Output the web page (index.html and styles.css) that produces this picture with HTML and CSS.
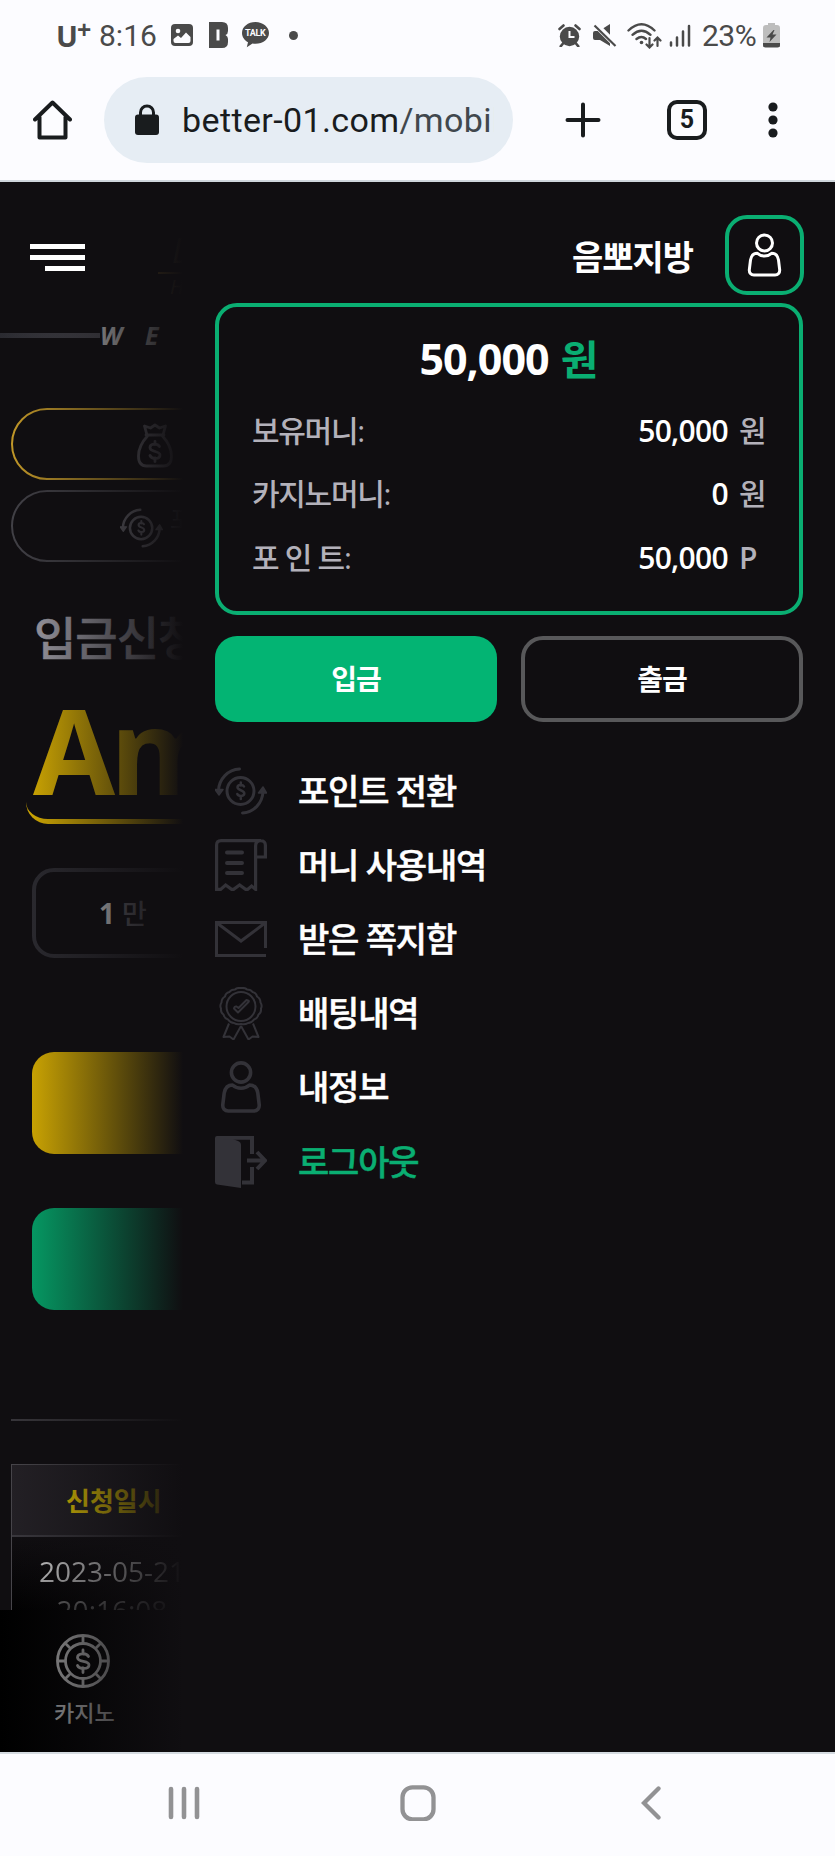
FILE: index.html
```html
<!DOCTYPE html>
<html lang="ko">
<head>
<meta charset="utf-8">
<title>better-01.com</title>
<link rel="stylesheet" href="styles.css">
</head>
<body>
<svg class="defs" width="0" height="0">
  <symbol id="convert" viewBox="0 0 52 48">
    <g fill="none" stroke="currentColor" stroke-width="3" stroke-linecap="round">
      <circle cx="25.5" cy="24" r="13.5"/>
      <path d="M24.500 2C13 2.500 4 12 3.500 23.500M27.500 46C39 45.500 47.500 36 48 24.500"/>
      <path d="M29 19.500c-1-2-6.500-2.200-6.500.8 0 3.500 6.800 2.400 6.800 6.200 0 3-5.800 3.200-7 .5M25.800 15.500v3M25.800 29v3" stroke-width="2.500"/>
    </g>
    <path d="M0 22.500h8L4 28zM43.500 26h8L48 20z" fill="currentColor" stroke="currentColor" stroke-width="1.500" stroke-linejoin="round"/>
  </symbol>
  <symbol id="user" viewBox="0 0 42 52">
    <g fill="none" stroke="currentColor" stroke-width="3.600" stroke-linejoin="round">
      <circle cx="21" cy="11.500" r="9.600"/>
      <path d="M12.500 24c2.500 2.200 5.500 3.300 8.500 3.300s6-1.100 8.500-3.300c5 0 7.500 3.500 8.300 8l1.400 11.500c.4 4-2 6.500-5.500 6.500H8.300c-3.500 0-5.900-2.500-5.500-6.500L4.200 32c.8-4.500 3.300-8 8.300-8z"/>
    </g>
  </symbol>
</svg>

<header class="system">
  <div class="status">
    <div class="status-left">
      <span class="carrier">U<sup>+</sup></span>
      <span class="clock">8:16</span>
      <svg class="i-pic" width="22" height="22" viewBox="0 0 22 22"><rect width="22" height="22" rx="4" fill="#4a4a4a"/><circle cx="7" cy="7" r="2.300" fill="#fcfcff"/><path d="M2.500 17v-2l4.500-3.500 3 2.500 5-5.500 4.500 4.500v4q0 2-2 2h-13q-2 0-2-2z" fill="#fcfcff"/></svg>
      <svg class="i-b" width="20" height="26" viewBox="0 0 20 26"><path d="M0 0h13q6 0 6 6v3q0 3-2.500 4Q19 14.500 19 17v3q0 6-6 6H0z" fill="#4a4a4a"/><path d="M7.500 7.500h3v11h-3z" fill="#fcfcff"/></svg>
      <span class="talk"><svg width="27" height="26" viewBox="0 0 27 26"><path d="M13.500 0C6 0 0 4.700 0 11c0 4 2.400 7.200 6 9.200l-1.200 5L10.500 21.500c1 .2 2 .3 3 .3C21 21.800 27 17 27 11S21 0 13.500 0z" fill="#4a4a4a"/></svg><b>TALK</b></span>
      <i class="dot"></i>
    </div>
    <div class="status-right">
      <svg width="23" height="23" viewBox="0 0 23 23"><circle cx="11.500" cy="12.500" r="9.700" fill="#4a4a4a"/><path d="M1.500 5 5.500 1.500M21.500 5 17.500 1.500M5 19.500l-2.300 2.800M18 19.500l2.300 2.800" stroke="#4a4a4a" stroke-width="2.600" stroke-linecap="round"/><path d="M11.500 7v6h5" fill="none" stroke="#fcfcff" stroke-width="2"/></svg>
      <svg class="i-mute" width="24" height="23" viewBox="0 0 24 23"><path d="M0 9q0-2 2-2h4l11-7v22L7 16H2q-2 0-2-2z" fill="#4a4a4a"/><path d="M1-1 24 22" stroke="#fcfcff" stroke-width="6"/><path d="M1.500 1.500 22.500 22" stroke="#4a4a4a" stroke-width="2.200"/></svg>
      <svg class="i-wifi" width="35" height="27" viewBox="0 0 35 27"><g fill="none" stroke="#4a4a4a" stroke-width="2.400" stroke-linecap="round"><path d="M1.500 8.500Q14.500-4 27.500 8.500M5.500 12.800q9-8 18 0M9.500 17q5-4 9.500 0"/><path d="M22.500 16v9M19.500 22.500l3 3 3-3M30.500 24v-8M27.500 18.500l3-3 3 3" stroke-width="2.200"/></g><circle cx="14.500" cy="20.500" r="1.800" fill="#4a4a4a"/></svg>
      <svg class="i-sig" width="22" height="23" viewBox="0 0 22 23"><path d="M2 18.500v3M8 13.500v8M14 7.500v14M20 2v19.500" stroke="#4a4a4a" stroke-width="2.500" stroke-linecap="round"/></svg>
      <span class="pct">23%</span>
      <svg class="i-bat" width="17" height="25" viewBox="0 0 17 25"><path d="M5 0h7v2h2q3 0 3 3v19H0V5q0-3 3-3h2z" fill="#bdbdbd"/><path d="M0 20h17v2q0 2.500-2.500 2.500h-12Q0 24.500 0 22z" fill="#4a4a4a"/><path d="m10.500 7-7 7.500h4L6.500 19l7-7.500h-4l2-4.500z" fill="#4a4a4a"/></svg>
    </div>
  </div>
  <div class="toolbar">
    <svg class="i-home" width="39" height="40" viewBox="0 0 39 40"><path d="M2 19.500 19.500 2.500 37 19.500M6.500 17v20.500h26V17" fill="none" stroke="#191c1e" stroke-width="4" stroke-linejoin="round" stroke-linecap="round"/></svg>
    <div class="omnibox">
      <svg width="24" height="32" viewBox="0 0 24 32"><rect y="10.500" width="24" height="20.500" rx="3" fill="#191c1e"/><path d="M5.500 12V8.500a6.500 6.500 0 0 1 13 0V12" fill="none" stroke="#191c1e" stroke-width="3"/></svg>
      <div class="url">better-01.com<span>/mobil</span></div>
    </div>
    <svg class="i-plus" width="36" height="36" viewBox="0 0 36 36"><path d="M2.500 18h31M18 2.500v31" stroke="#191c1e" stroke-width="4" stroke-linecap="round"/></svg>
    <div class="tabs">5</div>
    <svg class="i-more" width="10" height="36" viewBox="0 0 10 36"><g fill="#191c1e"><circle cx="5" cy="5" r="4.600"/><circle cx="5" cy="18" r="4.600"/><circle cx="5" cy="31" r="4.600"/></g></svg>
  </div>
</header>

<main class="app">
  <div class="page">
    <div class="brand"><span class="brand-a">L</span><span class="brand-b">H</span></div>
    <div class="notice"><i></i><span>W</span><span>E</span></div>
    <div class="pill gold">
      <svg class="bag" width="36" height="45" viewBox="0 0 36 45"><g fill="none" stroke="#8c8b94" stroke-width="2.800" stroke-linejoin="round" stroke-linecap="round"><path d="M10 12 7.500 3l6 2L18 2l4.500 3 6-2L26 12zM9 12h18M10.500 13C5 19 1.500 26 1.500 33c0 7 3 10 8 10h17c5 0 8-3 8-10 0-7-3.500-14-9-20"/><path d="M22.500 23.500c-2-3.500-9.500-3-9.500 1 0 5 10 3 10 7.500 0 4.500-8 4.500-10 .5M18 18.500v3M18 35v3.500"/></g></svg>
    </div>
    <div class="pill plain"><svg class="turn" width="43" height="40"><use href="#convert"/></svg><span>포</span></div>
    <h1>입금신청</h1>
    <div class="amount">Amount</div>
    <div class="quick"><b>1</b> 만</div>
    <div class="btn yellow"></div>
    <div class="btn green"></div>
    <hr>
    <div class="table">
      <div class="th">신청일시</div>
      <div class="td">2023-05-21<br>20:16:08</div>
    </div>
  </div>
  <div class="bottombar">
    <svg width="54" height="54" viewBox="0 0 54 54"><g fill="none" stroke="#a5a5a5" stroke-width="2.800"><circle cx="27" cy="27" r="25.500"/><circle cx="27" cy="27" r="17.500"/><path d="M27 2v8M27 44v8M2 27h8M44 27h8M9.500 9.500l5.500 5.500M39 39l5.500 5.500M9.500 44.500 15 39M39 15l5.500-5.500"/><path d="M32.500 22.500c-2-4-11-3.500-11 1 0 5.500 11.500 2.500 11.500 7.500 0 4.500-9.500 4.500-11.500.5M27 16v4M27 34v4.500" stroke-linecap="round"/></g></svg>
    <span>카지노</span>
  </div>
  <div class="fade"></div>
  <div class="burger"><i></i><i></i><i></i></div>

  <aside class="drawer">
    <div class="who"><strong>음뽀지방</strong><div class="avatar"><svg width="35" height="44"><use href="#user"/></svg></div></div>
    <section class="wallet">
      <div class="total">50,000 <em>원</em></div>
      <dl>
        <div><dt>보유머니:</dt><dd>50,000 <span>원</span></dd></div>
        <div><dt>카지노머니:</dt><dd>0 <span>원</span></dd></div>
        <div><dt>포 인 트:</dt><dd>50,000 <span class="pt">P</span></dd></div>
      </dl>
    </section>
    <div class="actions"><div class="fill">입금</div><div class="line">출금</div></div>
    <ul class="menu">
      <li><svg width="52" height="48"><use href="#convert"/></svg><span>포인트 전환</span></li>
      <li><svg width="52" height="52" viewBox="0 0 52 52"><g fill="none" stroke="currentColor" stroke-width="3.200"><path d="M46 1.600H6Q1.600 1.600 1.600 6v44.400h4l5-4.400 6 4.400h2l6-4.400 6 4.400h2l4-3.400 4 3.400V7q0-5.400 5-5.400T50.400 7v11h-10"/><path d="M12 13.500h15M12 24h15M12 34h15" stroke-width="4" stroke-linecap="round"/></g></svg><span>머니 사용내역</span></li>
      <li><svg width="52" height="36" viewBox="0 0 52 36"><path d="M50.500 27V1.600h-49v32.800H51M2 2l24 18L50 2" fill="none" stroke="currentColor" stroke-width="3"/></svg><span>받은 쪽지함</span></li>
      <li><svg width="52" height="53" viewBox="0 0 52 53"><g fill="none" stroke="currentColor" stroke-width="2" stroke-linejoin="round"><path d="M26 1q4-.5 6 1.500 4 0 5.500 2.500 4 1 4.500 4.500 3.500 2 3.500 6 2 3 .5 6 .5 4-2.500 6-1 4-4.500 5-2.500 3.500-6 3.500-3 2-7 1-4 1-7-1-3.500 0-6-3.500-3.500-1-4.500-5-3-2-2.500-6-1.500-3 .5-6 0-4 3.500-6Q10.500 6 14.500 5 16 2.500 20 2.500 22 .5 26 1z"/><circle cx="26" cy="19.500" r="14.500"/><path d="m19 21.500 4 4L33.500 15q1-1-.5-1.500l-1.500-.5-8 8-2-1.500q-2-.5-2.500 2z"/><path d="m14 36.500-5.500 13.500 6-.5 4 3L26 39M38 36.500l5.500 13.500-6-.5-4 3L26 39"/></g></svg><span>배팅내역</span></li>
      <li><svg width="52" height="52"><use href="#user"/></svg><span>내정보</span></li>
      <li class="out"><svg width="52" height="52" viewBox="0 0 52 52"><path d="M0 2Q0 0 2 0h8l13 5q3 1 3 4v43L2 48.500q-2-.5-2-2.500z" fill="currentColor"/><path d="M8 1.800h29V18M27 46.500h10V31M32 24.500h17M42 16l8 8.500-8 8.500" fill="none" stroke="currentColor" stroke-width="4"/></svg><span>로그아웃</span></li>
    </ul>
  </aside>
</main>

<nav class="sysnav">
  <svg width="32" height="34" viewBox="0 0 32 34"><path d="M3 3v28M16 3v28M29 3v28" stroke="#929294" stroke-width="4.600" stroke-linecap="round"/></svg>
  <svg width="36" height="36" viewBox="0 0 36 36"><rect x="2.500" y="2.300" width="31" height="32" rx="10" fill="none" stroke="#929294" stroke-width="4.300"/></svg>
  <svg width="20" height="34" viewBox="0 0 20 34"><path d="M17.500 2.500 3 17l14.500 14.500" fill="none" stroke="#929294" stroke-width="4.300" stroke-linecap="round"/></svg>
</nav>
</body>
</html>
```

FILE: styles.css
```css
* { box-sizing: border-box; margin: 0; padding: 0; }
body { width: 835px; height: 1856px; overflow: hidden; background: #100e11; font-family: "Open Sans", "Noto Sans CJK KR", sans-serif; }
svg { display: block; flex: none; }
.defs { position: absolute; }

/* system chrome */
.system { height: 182px; background: #fcfcff; border-bottom: 2px solid #cfd6dc; font-family: Roboto, sans-serif; }
.status { height: 70px; display: flex; justify-content: space-between; align-items: center; padding: 0 55px 0 56px; color: #4a4a4a; }
.status-left, .status-right { display: flex; align-items: center; }
.carrier { width: 43px; font: bold 29px/40px "Open Sans", sans-serif; white-space: nowrap; padding-top: 2px; }
.carrier sup { font-size: 25px; line-height: 0; vertical-align: 8px; margin-left: -1px; }
.clock { font-size: 30px; width: 72px; }
.i-b { margin-left: 16px; }
.talk { position: relative; margin-left: 13px; }
.talk b { position: absolute; left: 3px; top: 6px; color: #fcfcff; font-size: 9px; line-height: 10px; letter-spacing: -.3px; }
.dot { width: 9px; height: 9px; border-radius: 50%; background: #4a4a4a; margin-left: 20px; }
.i-mute { margin-left: 12px; }
.i-wifi { margin-left: 10px; }
.i-sig { margin-left: 7px; }
.pct { font-size: 30px; margin-left: 11px; width: 61px; letter-spacing: -.5px; }
.toolbar { height: 98px; display: flex; align-items: center; padding: 1px 57px 0 33px; }
.omnibox { width: 409px; height: 86px; margin-left: 32px; border-radius: 43px; background: #e6edf4; display: flex; align-items: center; padding-left: 31px; }
.url { width: 312px; margin-left: 23px; overflow: hidden; white-space: nowrap; font-size: 34px; line-height: 44px; color: #191c1e; letter-spacing: .38px; }
.url span { color: #41484d; }
.i-plus { margin-left: 52px; }
.tabs { width: 40px; height: 40px; margin-left: 66px; border: 4px solid #191c1e; border-radius: 10px; font-size: 25px; font-weight: bold; line-height: 32px; text-align: center; color: #191c1e; }
.i-more { margin-left: auto; }

/* page behind the drawer */
.app { position: relative; height: 1570px; overflow: hidden; background: #100e11; }
.page { width: 835px; height: 1570px; display: flex; flex-direction: column; overflow: hidden; }
.brand { height: 138px; padding: 46px 0 0 170px; display: flex; flex-direction: column; font-style: italic; color: #8d7a46; }
.brand-a { font-size: 34px; line-height: 44px; border-bottom: 2px solid #8d6d2a; margin-left: -12px; padding-left: 14px; height: 46px; }
.brand-b { font-size: 20px; line-height: 26px; }
.notice { height: 30px; display: flex; align-items: center; color: #f0f0f0; font: italic bold 25px/30px "Open Sans", sans-serif; }
.notice i { width: 100px; height: 5px; background: linear-gradient(90deg, #2a2a30, #55545c); }
.notice span { width: 45px; }
.pill { height: 72px; width: 800px; margin-left: 11px; border-radius: 36px; border: 2px solid #cca02a; color: #8c8b94; }
.gold { margin-top: 58px; padding: 13px 0 0 124px; }
.plain { margin-top: 10px; border-color: #45444a; padding: 16px 0 0 107px; display: flex; gap: 7px; font-size: 24px; line-height: 30px; }
.plain span { margin-top: -4px; }
h1 { margin: 37px 0 0 34px; height: 76px; font-size: 46px; line-height: 76px; letter-spacing: -1px; font-weight: 500; color: #b0aeb8; -webkit-text-stroke: .5px; }
.amount { margin: 18px 0 0 26px; height: 131px; width: 780px; padding-left: 7px; border-bottom: 5px solid #efc100; border-radius: 0 0 22px 22px; font-weight: bold; font-size: 119px; line-height: 112px; letter-spacing: -5px; color: #efc100; }
.quick { margin: 44px 0 0 32px; width: 230px; height: 90px; border: 4px solid #2f2e34; border-radius: 22px; padding-left: 63px; font-size: 27px; line-height: 82px; color: #7b7a82; font-weight: 500; }
.quick b { color: #fff; font-size: 28px; }
.btn { margin-left: 32px; width: 769px; height: 102px; border-radius: 22px; }
.yellow { margin-top: 94px; background: #efc100; }
.green { margin-top: 54px; background: #03b473; }
hr { margin: 109px 0 0 11px; border: 0; height: 2px; background: #3a383d; }
.table { margin: 43px 0 0 11px; width: 800px; border: 1px solid #4a484d; height: 220px; }
.th { height: 72px; border-bottom: 2px solid #3c3a40; background: #242126; padding-left: 54px; color: #ffdc00; font-size: 26px; line-height: 72px; font-weight: bold; }
.td { padding: 15px 0 0 18px; width: 182px; font-size: 28px; line-height: 39px; text-align: center; white-space: nowrap; background: linear-gradient(#ddd 50%, #444) text, linear-gradient(#100e11, #000); color: transparent; height: 75px; }
.page > * { flex: none; }
.bottombar { position: absolute; left: 0; right: 0; bottom: 0; height: 142px; background: #000; padding: 24px 0 0 56px; color: #a5a5a5; font-size: 22px; line-height: 32px; }
.bottombar span { display: block; margin: 8px 0 0 -2px; font-weight: 500; }
.fade { position: absolute; left: 0; top: 0; width: 183px; height: 100%; background: linear-gradient(90deg, rgba(16,14,17,0), #100e11); }
.burger { position: absolute; left: 30px; top: 62px; width: 55px; display: flex; flex-direction: column; align-items: flex-end; gap: 6px; }
.burger i { width: 55px; height: 5px; background: #fff; }
.burger i:last-child { width: 40px; }

/* account drawer */
.drawer { position: absolute; left: 183px; top: 0; right: 0; bottom: 0; padding: 33px 31px 0 32px; background: #100e11; color: #fff; }
.who { display: flex; justify-content: flex-end; align-items: center; height: 80px; font-size: 34px; letter-spacing: -1px; }
.avatar { width: 79px; height: 80px; margin-left: 32px; border: 4px solid #0aae72; border-radius: 22px; display: flex; align-items: center; justify-content: center; }
.wallet { width: 588px; height: 312px; margin-top: 8px; border: 4px solid #0aae72; border-radius: 22px; padding: 22px 34px 0 33px; }
.total { height: 60px; line-height: 60px; font-size: 43px; font-weight: bold; letter-spacing: -1px; word-spacing: 2px; text-align: center; }
.total em { font-style: normal; font-size: 41px; color: #0aae72; }
dl div { display: flex; justify-content: space-between; height: 63.300px; line-height: 63px; font-size: 30px; letter-spacing: -1.300px; color: #b3b1ba; font-weight: 500; }
dl { margin-top: 10px; }
dd { color: #fff; font-weight: 600; letter-spacing: -.700px; word-spacing: 4px; }
dd span { color: #b3b1ba; font-weight: 500; display: inline-block; width: 26px; }
dd .pt { font-weight: 600; }
.actions { display: flex; gap: 24px; margin-top: 21px; width: 588px; }
.actions div { width: 282px; height: 86px; border-radius: 22px; text-align: center; line-height: 86px; font-size: 28px; font-weight: bold; letter-spacing: -1px; }
.actions .fill { background: #03b473; }
.actions .line { border: 4px solid #58585a; line-height: 78px; }
.menu { list-style: none; margin-top: 32px; }
.menu li { height: 74.100px; display: flex; align-items: center; gap: 31px; font-size: 34px; font-weight: 500; letter-spacing: -1.200px; line-height: 50px; -webkit-text-stroke: .5px; }
.menu svg { color: #333238; }
.menu .out span { color: #0aae72; }

.sysnav { height: 104px; background: #fcfcff; border-top: 2px solid #d5dbe1; display: flex; padding: 32px 0 0 168px; gap: 200px; }
.sysnav svg:nth-child(2) { margin-top: -1px; }
.sysnav svg:last-child { margin-left: 5px; }
```
